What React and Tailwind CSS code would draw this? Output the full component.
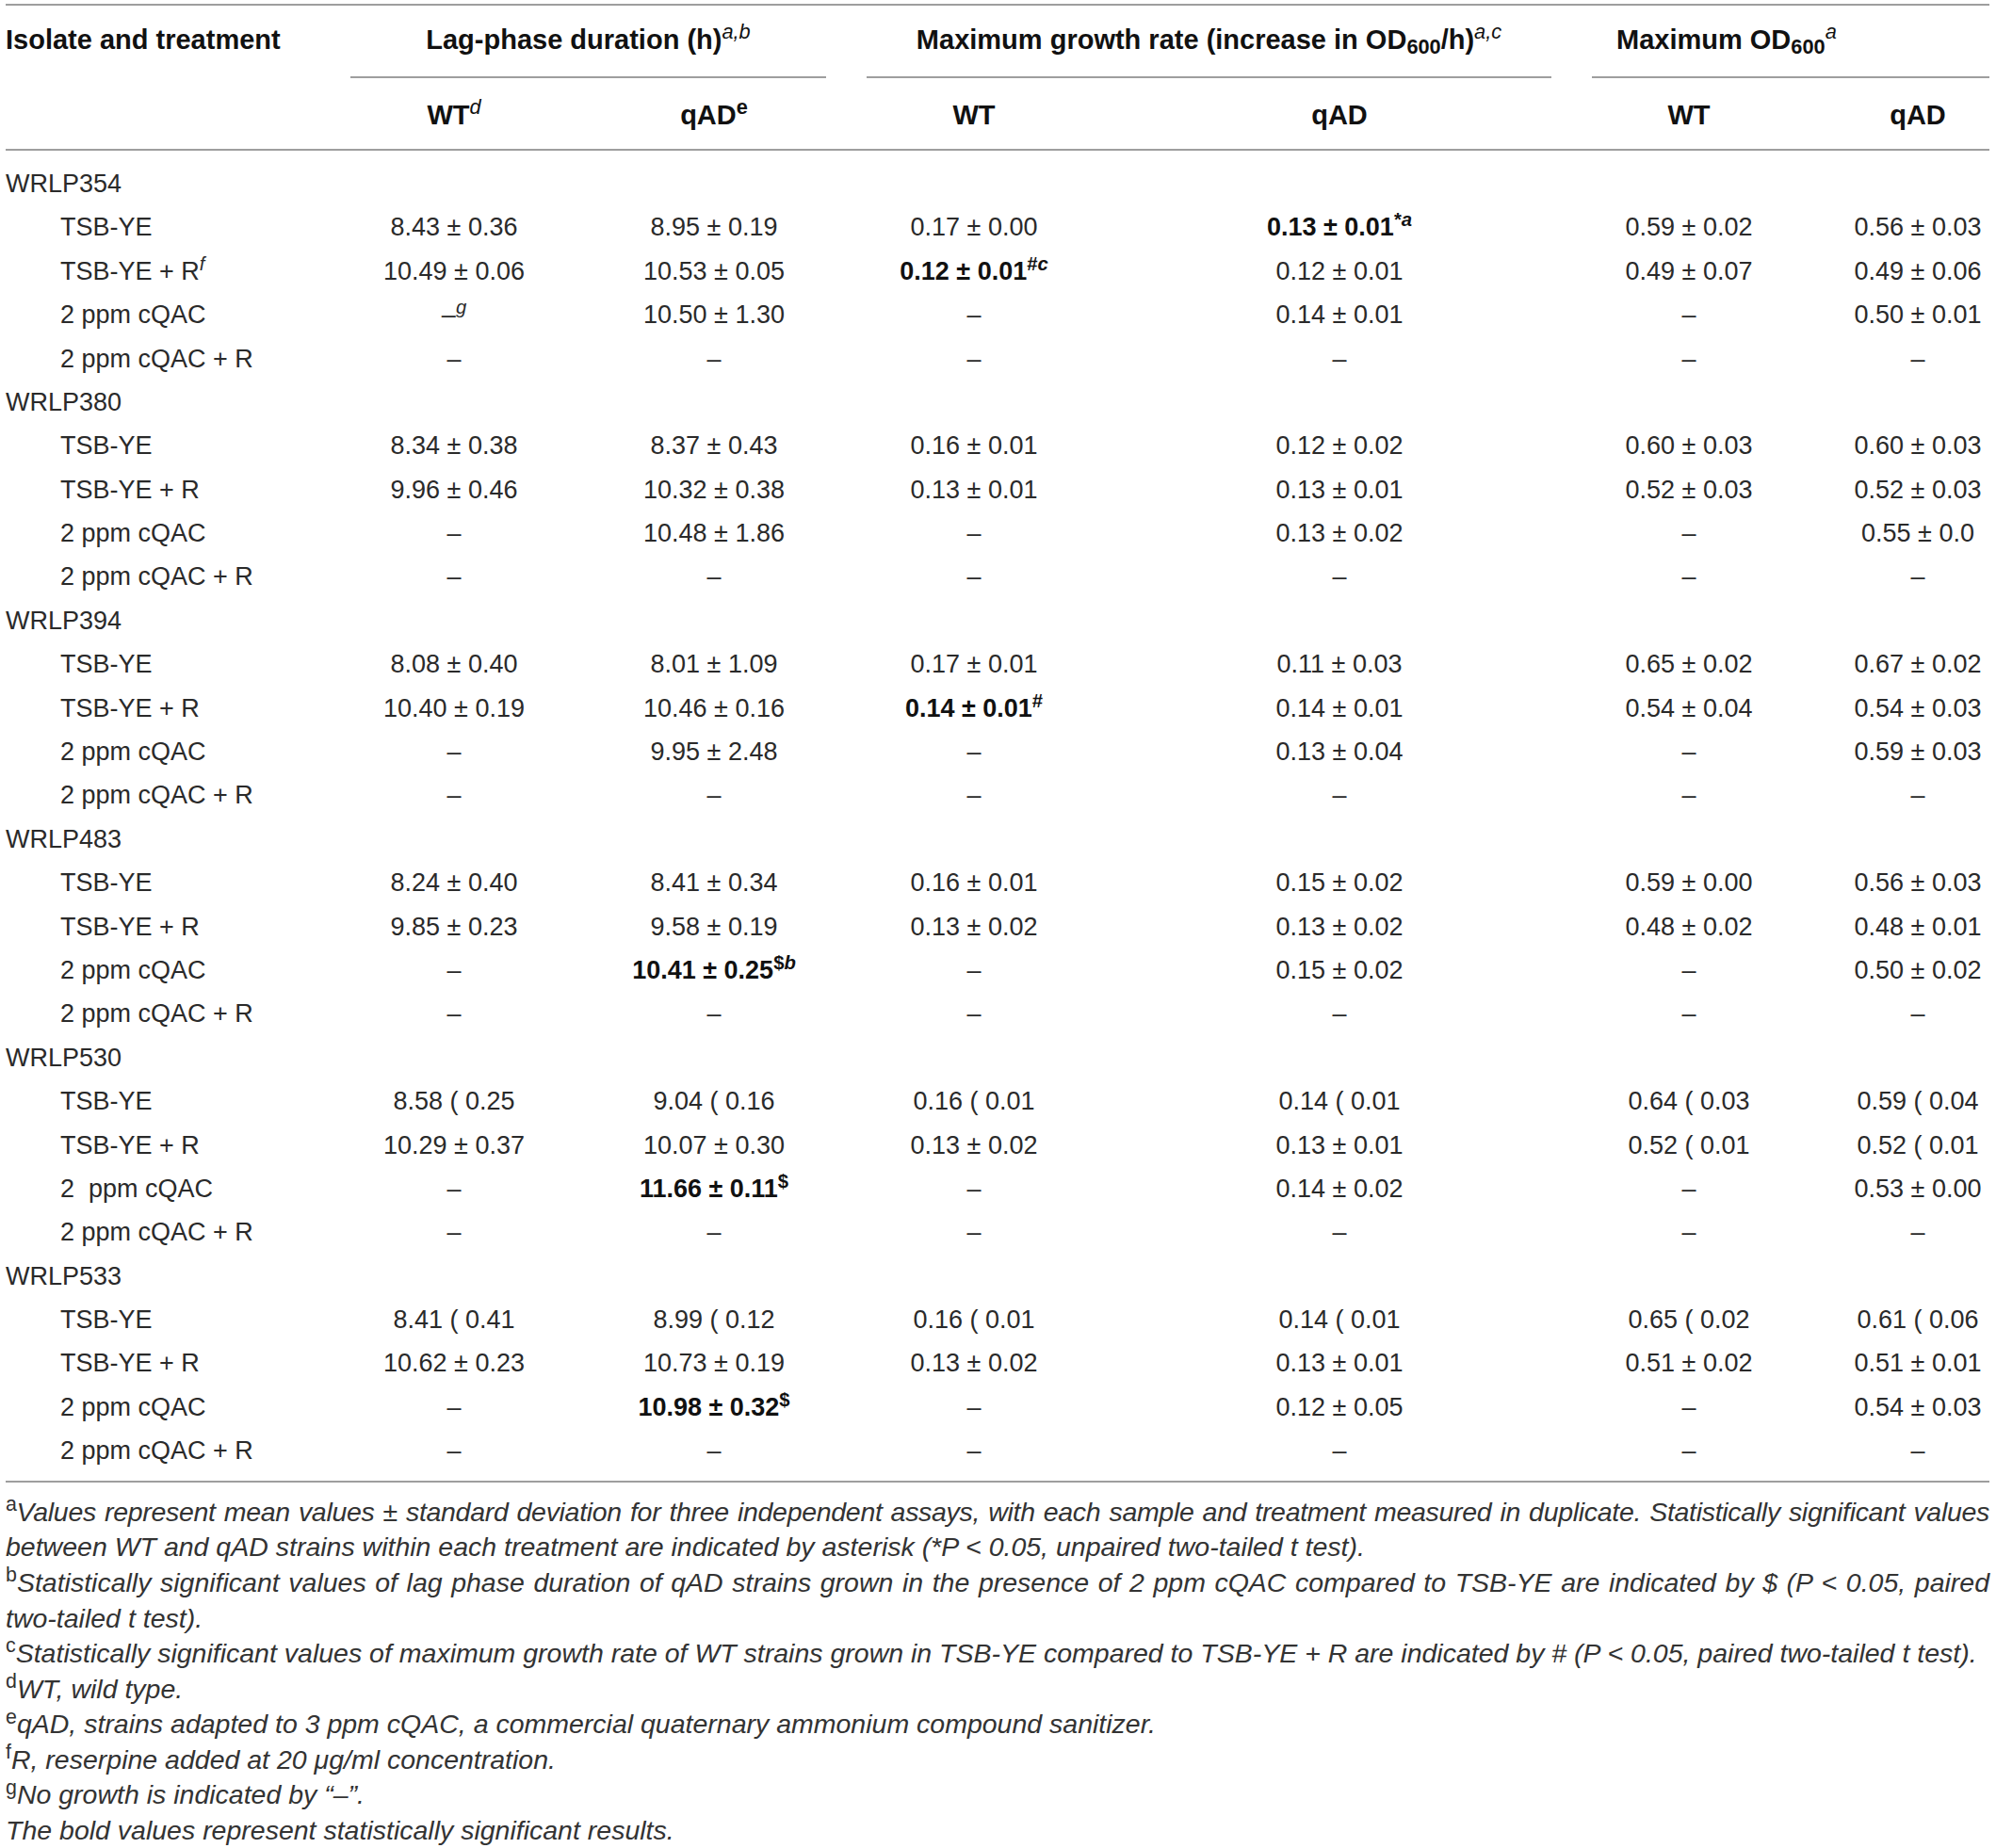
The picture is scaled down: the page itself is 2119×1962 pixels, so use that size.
import React from 'react';

const B = ({ children, sup }) => (
  <span className="font-bold text-[#111]">
    {children}
    {sup && <sup>{sup}</sup>}
  </span>
);

const D = '–';

const groups = [
  {
    iso: 'WRLP354',
    rows: [
      ['TSB-YE', '8.43 ± 0.36', '8.95 ± 0.19', '0.17 ± 0.00', <B sup={<>*<i>a</i></>}>0.13 ± 0.01</B>, '0.59 ± 0.02', '0.56 ± 0.03'],
      [<>TSB-YE + R<sup><i>f</i></sup></>, '10.49 ± 0.06', '10.53 ± 0.05', <B sup={<>#<i>c</i></>}>0.12 ± 0.01</B>, '0.12 ± 0.01', '0.49 ± 0.07', '0.49 ± 0.06'],
      ['2 ppm cQAC', <>{D}<sup><i>g</i></sup></>, '10.50 ± 1.30', D, '0.14 ± 0.01', D, '0.50 ± 0.01'],
      ['2 ppm cQAC + R', D, D, D, D, D, D],
    ],
  },
  {
    iso: 'WRLP380',
    rows: [
      ['TSB-YE', '8.34 ± 0.38', '8.37 ± 0.43', '0.16 ± 0.01', '0.12 ± 0.02', '0.60 ± 0.03', '0.60 ± 0.03'],
      ['TSB-YE + R', '9.96 ± 0.46', '10.32 ± 0.38', '0.13 ± 0.01', '0.13 ± 0.01', '0.52 ± 0.03', '0.52 ± 0.03'],
      ['2 ppm cQAC', D, '10.48 ± 1.86', D, '0.13 ± 0.02', D, '0.55 ± 0.0'],
      ['2 ppm cQAC + R', D, D, D, D, D, D],
    ],
  },
  {
    iso: 'WRLP394',
    rows: [
      ['TSB-YE', '8.08 ± 0.40', '8.01 ± 1.09', '0.17 ± 0.01', '0.11 ± 0.03', '0.65 ± 0.02', '0.67 ± 0.02'],
      ['TSB-YE + R', '10.40 ± 0.19', '10.46 ± 0.16', <B sup="#">0.14 ± 0.01</B>, '0.14 ± 0.01', '0.54 ± 0.04', '0.54 ± 0.03'],
      ['2 ppm cQAC', D, '9.95 ± 2.48', D, '0.13 ± 0.04', D, '0.59 ± 0.03'],
      ['2 ppm cQAC + R', D, D, D, D, D, D],
    ],
  },
  {
    iso: 'WRLP483',
    rows: [
      ['TSB-YE', '8.24 ± 0.40', '8.41 ± 0.34', '0.16 ± 0.01', '0.15 ± 0.02', '0.59 ± 0.00', '0.56 ± 0.03'],
      ['TSB-YE + R', '9.85 ± 0.23', '9.58 ± 0.19', '0.13 ± 0.02', '0.13 ± 0.02', '0.48 ± 0.02', '0.48 ± 0.01'],
      ['2 ppm cQAC', D, <B sup={<>$<i>b</i></>}>10.41 ± 0.25</B>, D, '0.15 ± 0.02', D, '0.50 ± 0.02'],
      ['2 ppm cQAC + R', D, D, D, D, D, D],
    ],
  },
  {
    iso: 'WRLP530',
    rows: [
      ['TSB-YE', '8.58 ( 0.25', '9.04 ( 0.16', '0.16 ( 0.01', '0.14 ( 0.01', '0.64 ( 0.03', '0.59 ( 0.04'],
      ['TSB-YE + R', '10.29 ± 0.37', '10.07 ± 0.30', '0.13 ± 0.02', '0.13 ± 0.01', '0.52 ( 0.01', '0.52 ( 0.01'],
      ['2\u00a0\u00a0ppm cQAC', D, <B sup="$">11.66 ± 0.11</B>, D, '0.14 ± 0.02', D, '0.53 ± 0.00'],
      ['2 ppm cQAC + R', D, D, D, D, D, D],
    ],
  },
  {
    iso: 'WRLP533',
    rows: [
      ['TSB-YE', '8.41 ( 0.41', '8.99 ( 0.12', '0.16 ( 0.01', '0.14 ( 0.01', '0.65 ( 0.02', '0.61 ( 0.06'],
      ['TSB-YE + R', '10.62 ± 0.23', '10.73 ± 0.19', '0.13 ± 0.02', '0.13 ± 0.01', '0.51 ± 0.02', '0.51 ± 0.01'],
      ['2 ppm cQAC', D, <B sup="$">10.98 ± 0.32</B>, D, '0.12 ± 0.05', D, '0.54 ± 0.03'],
      ['2 ppm cQAC + R', D, D, D, D, D, D],
    ],
  },
];

const cols = 'grid grid-cols-[292px_368px_184px_368px_408px_334px_152px]';

const App = () => {
  return (
    <div className="min-h-screen w-[2119px] bg-white pl-[6px] pr-[7px] pt-[4px] font-['Liberation_Sans',Arial,sans-serif] text-[#2a2a2a]">
      <div className="h-[2px] bg-[#9e9e9e]" />

      {/* group headers */}
      <div className="flex text-[29px] font-bold text-[#111] whitespace-nowrap">
        <div className="w-[366px] h-[77px] pb-[2px] flex items-center border-b-2 border-transparent">Isolate and treatment</div>
        <div className="w-[505px] h-[77px] pb-[2px] flex items-center justify-center border-b-2 border-[#9e9e9e]">
          <span>Lag-phase duration (h)<sup className="italic font-normal">a,b</sup></span>
        </div>
        <div className="w-[43px]" />
        <div className="w-[727px] h-[77px] pb-[2px] flex items-center justify-center border-b-2 border-[#9e9e9e]">
          <span>Maximum growth rate (increase in OD<sub>600</sub>/h)<sup className="italic font-normal">a,c</sup></span>
        </div>
        <div className="w-[43px]" />
        <div className="w-[422px] h-[77px] pb-[2px] pl-[26px] flex items-center border-b-2 border-[#9e9e9e]">
          <span>Maximum OD<sub>600</sub><sup className="italic font-normal">a</sup></span>
        </div>
      </div>

      {/* sub headers */}
      <div className={`${cols} h-[75px] pt-[5px] items-center text-center text-[29px] font-bold text-[#111]`}>
        <div />
        <div>WT<sup className="italic font-normal">d</sup></div>
        <div>qAD<sup>e</sup></div>
        <div>WT</div>
        <div>qAD</div>
        <div>WT</div>
        <div>qAD</div>
      </div>
      <div className="h-[2px] bg-[#9e9e9e]" />

      {/* body */}
      <div className="pt-[12px] pb-[8px] text-[27px] whitespace-nowrap">
        {groups.map((g) => (
          <React.Fragment key={g.iso}>
            <div className={`${cols} h-[46.4px] items-center`}>
              <div>{g.iso}</div>
            </div>
            {g.rows.map((r, i) => (
              <div key={i} className={`${cols} h-[46.4px] items-center text-center`}>
                <div className="text-left pl-[58px]">{r[0]}</div>
                {r.slice(1).map((c, j) => (
                  <div key={j}>{c}</div>
                ))}
              </div>
            ))}
          </React.Fragment>
        ))}
      </div>
      <div className="h-[2px] bg-[#9e9e9e]" />

      {/* footnotes */}
      <div className="pt-[13px] text-[28.5px] leading-[37.6px] italic text-[#333]">
        <div className="whitespace-nowrap tracking-[-0.3px] [text-align-last:justify]">
          <sup className="not-italic">a</sup>Values represent mean values ± standard deviation for three independent assays, with each sample and treatment measured in duplicate. Statistically significant values
        </div>
        <div>between WT and qAD strains within each treatment are indicated by asterisk (*P &lt; 0.05, unpaired two-tailed t test).</div>
        <div className="whitespace-nowrap [text-align-last:justify]">
          <sup className="not-italic">b</sup>Statistically significant values of lag phase duration of qAD strains grown in the presence of 2 ppm cQAC compared to TSB-YE are indicated by $ (P &lt; 0.05, paired
        </div>
        <div>two-tailed t test).</div>
        <div className="whitespace-nowrap">
          <sup className="not-italic">c</sup>Statistically significant values of maximum growth rate of WT strains grown in TSB-YE compared to TSB-YE + R are indicated by # (P &lt; 0.05, paired two-tailed t test).
        </div>
        <div><sup className="not-italic">d</sup>WT, wild type.</div>
        <div><sup className="not-italic">e</sup>qAD, strains adapted to 3 ppm cQAC, a commercial quaternary ammonium compound sanitizer.</div>
        <div><sup className="not-italic">f</sup>R, reserpine added at 20 μg/ml concentration.</div>
        <div><sup className="not-italic">g</sup>No growth is indicated by “–”.</div>
        <div>The bold values represent statistically significant results.</div>
      </div>
    </div>
  );
};

export default App;
